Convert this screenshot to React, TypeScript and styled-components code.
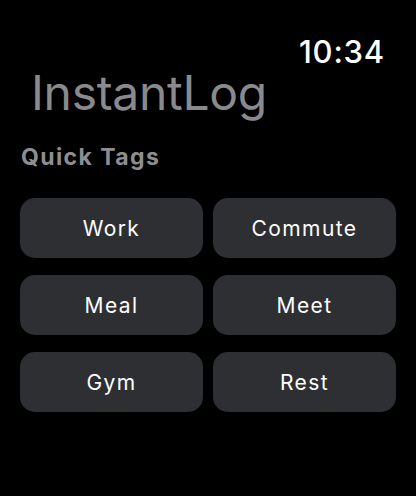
import React from 'react';
import styled, { createGlobalStyle } from 'styled-components';

const tags = ['Work', 'Commute', 'Meal', 'Meet', 'Gym', 'Rest'];

const GlobalStyle = createGlobalStyle`
  html, body {
    margin: 0;
    padding: 0;
    background: #000;
  }
  body {
    font-family: Inter, "Noto Sans", sans-serif;
  }
`;

const Screen = styled.div`
  width: 416px;
  height: 496px;
  background: #000;
  box-sizing: border-box;
  padding: 0 20px 0 20px;
  display: flex;
  flex-direction: column;
`;

const StatusBar = styled.div`
  display: flex;
  justify-content: flex-end;
  padding-top: 34px;
  padding-right: 11px;
  height: 36px;
`;

const Time = styled.span`
  color: #fff;
  font-size: 31px;
  font-weight: 500;
  line-height: 36px;
  letter-spacing: 0.8px;
`;

const Title = styled.h1`
  margin: 0;
  padding-left: 11px;
  color: #8a8a8c;
  font-size: 48px;
  font-weight: 400;
  line-height: 46px;
  letter-spacing: -0.3px;
`;

const SectionTitle = styled.h2`
  margin: 29px 0 0 1px;
  color: #8e8e92;
  font-size: 23px;
  font-weight: 700;
  line-height: 24px;
  letter-spacing: 1.4px;
`;

const Grid = styled.div`
  margin-top: 29px;
  display: grid;
  grid-template-columns: 1fr 1fr;
  column-gap: 10px;
  row-gap: 17px;
`;

const TagButton = styled.button`
  height: 60px;
  border: none;
  border-radius: 15px;
  background: #2e2f33;
  color: #fff;
  font-family: Inter, "Noto Sans", sans-serif;
  font-size: 21px;
  font-weight: 400;
  letter-spacing: 1.4px;
  padding: 0;
  cursor: pointer;
`;

export default function App() {
  return (
    <>
      <GlobalStyle />
      <Screen>
        <StatusBar>
          <Time>10:34</Time>
        </StatusBar>
        <Title>InstantLog</Title>
        <SectionTitle>Quick Tags</SectionTitle>
        <Grid>
          {tags.map((tag) => (
            <TagButton key={tag}>{tag}</TagButton>
          ))}
        </Grid>
      </Screen>
    </>
  );
}
